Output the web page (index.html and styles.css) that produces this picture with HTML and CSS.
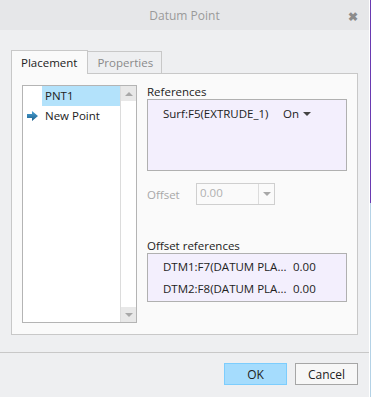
FILE: index.html
```html
<!DOCTYPE html>
<html lang="en">
<head>
<meta charset="UTF-8">
<meta name="viewport" content="width=device-width, initial-scale=1.0">
<title>Datum Point</title>
<link rel="stylesheet" href="styles.css">
</head>
<body>
<div class="dialog">
<div class="titlebar">
<span class="title">Datum Point</span>
<span class="close">&#10006;</span>
</div>
<div class="content">
<div class="tabs">
<div class="tab active">Placement</div>
<div class="tab">Properties</div>
</div>
<div class="panel">
<div class="list">
<div class="items">
<div class="item selected"><span class="icon"></span><span class="name">PNT1</span></div>
<div class="item">
<span class="icon">
<svg width="11" height="10" viewBox="0 0 11 10"><defs><linearGradient id="ag" x1="0" y1="0" x2="0" y2="1"><stop offset="0" stop-color="#4ba3d6"/><stop offset="1" stop-color="#1d5f8c"/></linearGradient></defs><path d="M0 3 H5 V0 L11 5 L5 10 V7 H0 Z" fill="url(#ag)"/></svg>
</span>
<span class="name">New Point</span>
</div>
</div>
<div class="scrollbar">
<div class="sbtn"><span class="tri up"></span></div>
<div class="track"></div>
<div class="sbtn"><span class="tri down"></span></div>
</div>
</div>
<div class="side">
<div class="label">References</div>
<div class="refbox refs">
<div class="refrow"><span class="refname">Surf:F5(EXTRUDE_1)</span><span class="refval">On <span class="tri down dark"></span></span></div>
</div>
<div class="offset">
<span class="offlabel">Offset</span>
<div class="combo"><span class="combotext">0.00</span><span class="combobtn"><span class="tri down"></span></span></div>
</div>
<div class="label">Offset references</div>
<div class="refbox offrefs">
<div class="refrow"><span class="refname">DTM1:F7(DATUM PLA...</span><span class="refnum">0.00</span></div>
<div class="refrow"><span class="refname">DTM2:F8(DATUM PLA...</span><span class="refnum">0.00</span></div>
</div>
</div>
</div>
</div>
<div class="footer">
<button class="btn ok">OK</button>
<button class="btn">Cancel</button>
</div>
</div>
<div class="edge"></div>
</body>
</html>
```

FILE: styles.css
```css
body {
    margin: 0;
    padding: 0;
    display: flex;
    height: 397px;
    overflow: hidden;
    font-family: "Open Sans", "Noto Sans", sans-serif;
    font-size: 11.5px;
    color: #222;
    background-color: #eeeff1;
}
.dialog {
    width: 369px;
    height: 397px;
    display: flex;
    flex-direction: column;
    background-color: #eeeff1;
}
.edge {
    width: 2px;
    background: linear-gradient(#ffffff 0, #ffffff 0) left / 1px 100% no-repeat,
                linear-gradient(#6a3ab2 203px, #b4d2e6 203px) right / 1px 100% no-repeat;
}
.titlebar {
    height: 30px;
    background-color: #e6e7e9;
    display: flex;
    align-items: center;
    justify-content: center;
    position: relative;
}
.title {
    color: #9a9a9a;
    font-size: 12px;
}
.close {
    position: absolute;
    right: 11px;
    top: 8px;
    font-size: 12px;
    color: #8c8c8c;
    font-weight: bold;
}
.content {
    padding: 20px 11px 0 11px;
}
.tabs {
    display: flex;
    height: 23px;
    align-items: flex-end;
}
.tab {
    height: 21px;
    padding: 0 9px;
    line-height: 21px;
    border: 1px solid #c8c8c8;
    border-bottom: none;
    color: #8a8a8a;
    background-color: #eeeff1;
    white-space: nowrap;
}
.tab.active {
    height: 23px;
    line-height: 24px;
    padding: 0 10px 0 9px;
    color: #222;
    background-color: #fafafa;
    position: relative;
    top: 1px;
}
.tab + .tab {
    border-left: none;
    padding: 0 8px 0 9px;
}
.panel {
    height: 239px;
    border: 1px solid #c8c8c8;
    background-color: #fafafa;
    padding: 11px 9px 10px 10px;
    display: flex;
    gap: 10px;
}
.list {
    width: 113px;
    height: 236px;
    border: 1px solid #b4b4b4;
    background-color: #fff;
    display: flex;
}
.items {
    flex: 1;
}
.item {
    height: 20px;
    display: flex;
    align-items: center;
}
.item .icon {
    width: 19px;
    box-sizing: border-box;
    padding-left: 4px;
    display: flex;
    align-items: center;
}
.item .name {
    flex: 1;
    height: 20px;
    line-height: 20px;
    padding-left: 3px;
    white-space: nowrap;
}
.item.selected .name {
    background-color: #b3e2fb;
}
.scrollbar {
    width: 15px;
    border-left: 1px solid #dcdcdc;
    display: flex;
    flex-direction: column;
}
.sbtn {
    height: 15px;
    background-color: #e8e8e8;
    display: flex;
    align-items: center;
    justify-content: center;
}
.track {
    flex: 1;
}
.tri {
    width: 0;
    height: 0;
    border-left: 4px solid transparent;
    border-right: 4px solid transparent;
    display: inline-block;
}
.tri.up {
    border-bottom: 4px solid #a8a8a8;
}
.tri.down {
    border-top: 4px solid #a8a8a8;
}
.tri.dark {
    border-top-color: #444;
    vertical-align: 2px;
    margin-left: 1px;
}
.side {
    width: 200px;
    display: flex;
    flex-direction: column;
}
.label {
    height: 14px;
    line-height: 14px;
    white-space: nowrap;
}
.refbox {
    border: 1px solid #b0b0b0;
    background-color: #f3effd;
    padding: 2px 0 0 15px;
}
.refs {
    height: 68px;
}
.offrefs {
    height: 46px;
    padding-top: 1px;
}
.refrow {
    display: flex;
    height: 22px;
    align-items: center;
    white-space: nowrap;
}
.refname {
    width: 120px;
    overflow: hidden;
}
.offrefs .refname {
    width: 130px;
}
.offset {
    display: flex;
    align-items: center;
    margin-top: 12px;
    height: 22px;
    margin-bottom: 34px;
}
.offlabel {
    width: 49px;
    color: #a8a8a8;
}
.combo {
    width: 77px;
    height: 20px;
    border: 1px solid #cfcfcf;
    display: flex;
    background-color: #fafafa;
}
.combotext {
    flex: 1;
    color: #b0b0b0;
    padding-left: 3px;
    line-height: 18px;
}
.combobtn {
    width: 15px;
    border-left: 1px solid #dcdcdc;
    display: flex;
    align-items: center;
    justify-content: center;
}
.footer {
    margin-top: 17px;
    border-top: 1px solid #c8c8c8;
    padding: 10px 11px 0 0;
    display: flex;
    justify-content: flex-end;
    gap: 8px;
}
.btn {
    width: 63px;
    height: 22px;
    font-family: "Open Sans", "Noto Sans", sans-serif;
    font-size: 12px;
    color: #222;
    background-color: #f7f7f7;
    border: 1px solid #a6a6a6;
    padding: 0;
}
.btn.ok {
    background-color: #a5dcfd;
    border-color: #7dcdfd;
}
```
